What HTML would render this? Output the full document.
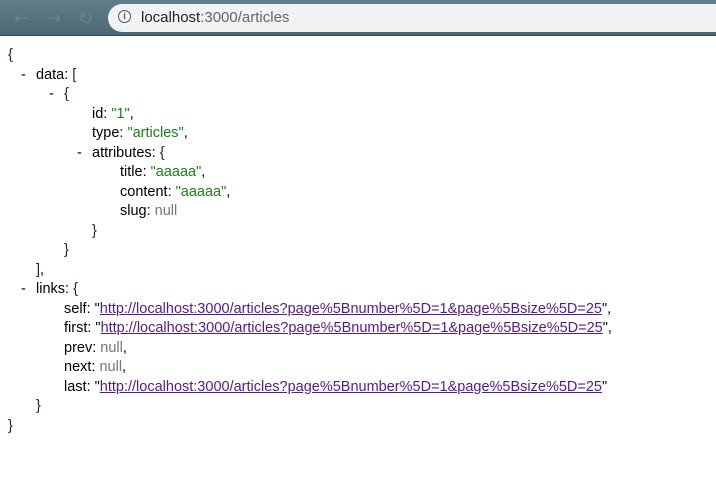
<!DOCTYPE html>
<html><head><meta charset="utf-8"><style>
html,body{margin:0;padding:0;background:#fff;width:716px;height:498px;overflow:hidden}
.bar{position:absolute;left:0;top:0;width:716px;height:36px;background:linear-gradient(#607d89,#4b6874);border-bottom:1px solid #2f4a55;box-sizing:border-box}
.pill{position:absolute;left:108px;top:4px;width:640px;height:28px;background:#f1f2f4;border-radius:14px}
.url{position:absolute;left:141px;top:9px;font:15px "Liberation Sans",sans-serif;color:#222}
.url span{color:#666}
.info{position:absolute;left:118px;top:10px;width:13px;height:13px;border:1.5px solid #555;border-radius:50%;box-sizing:border-box;font:bold 9px "Liberation Sans",sans-serif;color:#555;text-align:center;line-height:10px}
.nav{position:absolute;top:8px;font:18px "DejaVu Sans",sans-serif;color:#6a828c}
.code{position:absolute;top:46px;left:0;font:14.5px "Liberation Sans",sans-serif;color:#000;line-height:19.5px}
.l{position:absolute;white-space:nowrap}
.s{color:#1a7f1a}.n{color:#777}a{color:#551a8b;text-decoration:underline}
.b{color:#3a2010}
</style></head><body>
<div class="bar"><div class="nav" style="left:14px">←</div><div class="nav" style="left:46px">→</div><div class="nav" style="left:78px">↻</div>
<div class="pill"></div><div class="info">i</div><div class="url">localhost<span>:3000/articles</span></div></div>
<div class="code">
<div class="l b" style="left:8px;top:0">{</div>
<div class="l" style="left:21px;top:19.5px">-</div><div class="l" style="left:36px;top:19.5px">data: <span class="b">[</span></div>
<div class="l" style="left:49px;top:39px">-</div><div class="l b" style="left:64px;top:39px">{</div>
<div class="l" style="left:92px;top:58.5px">id: <span class="s">"1"</span>,</div>
<div class="l" style="left:92px;top:78px">type: <span class="s">"articles"</span>,</div>
<div class="l" style="left:77px;top:97.5px">-</div><div class="l" style="left:92px;top:97.5px">attributes: <span class="b">{</span></div>
<div class="l" style="left:120px;top:117px">title: <span class="s">"aaaaa"</span>,</div>
<div class="l" style="left:120px;top:136.5px">content: <span class="s">"aaaaa"</span>,</div>
<div class="l" style="left:120px;top:156px">slug: <span class="n">null</span></div>
<div class="l b" style="left:92px;top:175.5px">}</div>
<div class="l b" style="left:64px;top:195px">}</div>
<div class="l" style="left:36px;top:214.5px"><span class="b">]</span>,</div>
<div class="l" style="left:21px;top:234px">-</div><div class="l" style="left:36px;top:234px">links: <span class="b">{</span></div>
<div class="l" style="left:64px;top:253.5px">self: "<a>http://localhost:3000/articles?page%5Bnumber%5D=1&amp;page%5Bsize%5D=25</a>",</div>
<div class="l" style="left:64px;top:273px">first: "<a>http://localhost:3000/articles?page%5Bnumber%5D=1&amp;page%5Bsize%5D=25</a>",</div>
<div class="l" style="left:64px;top:292.5px">prev: <span class="n">null</span>,</div>
<div class="l" style="left:64px;top:312px">next: <span class="n">null</span>,</div>
<div class="l" style="left:64px;top:331.5px">last: "<a>http://localhost:3000/articles?page%5Bnumber%5D=1&amp;page%5Bsize%5D=25</a>"</div>
<div class="l b" style="left:36px;top:351px">}</div>
<div class="l b" style="left:8px;top:370.5px">}</div>
</div>
</body></html>
